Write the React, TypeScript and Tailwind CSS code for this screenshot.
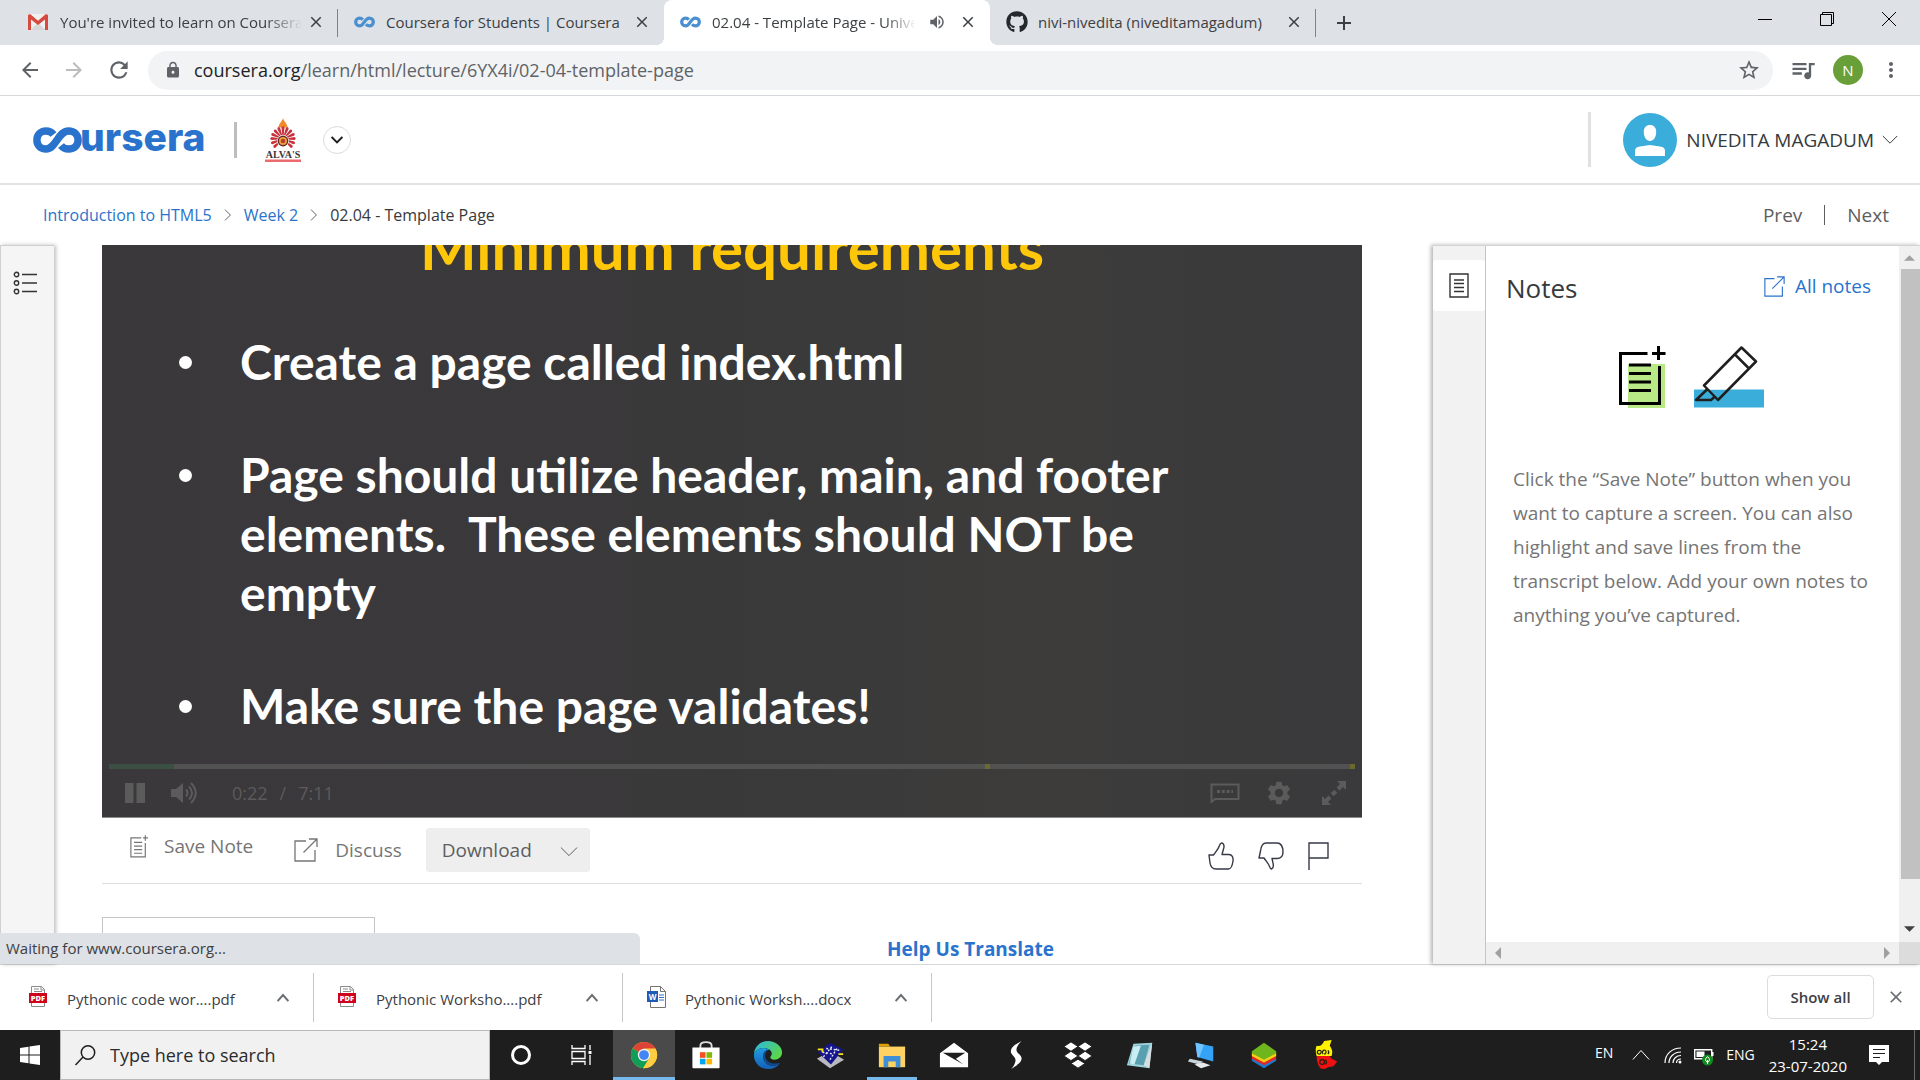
import React from "react";
import {
  MdArrowBack,
  MdArrowForward,
  MdRefresh,
  MdLock,
  MdStarBorder,
  MdQueueMusic,
  MdMoreVert,
  MdSettings,
  MdClose,
  MdAdd,
  MdVolumeUp,
} from "react-icons/md";
import { FaGithub } from "react-icons/fa";

/* ---------- shared drawings ---------- */

function InfinityMark({ className }: { className?: string }) {
  return (
    <svg viewBox="0 0 49 26" className={className} fill="none" stroke="currentColor" strokeWidth="7.5" aria-hidden="true">
      <path d="M20.500 7.500C18.500 5 16 3.900 13 3.900C7.500 3.900 3.900 8 3.900 13S7.500 22.100 13 22.100C23 22.100 25 3.900 35.500 3.900C41.500 3.900 45.100 8 45.100 13S41.500 22.100 35.500 22.100C32.500 22.100 30 21 28 18.500" />
    </svg>
  );
}

function GmailIcon() {
  return (
    <svg viewBox="0 0 20 16" className="h-4 w-5" aria-hidden="true">
      <rect width="20" height="16" rx="1" fill="#f1f1f1" />
      <path d="M2.500 16 10 8.500 17.500 16z" fill="#d8d8d8" />
      <path d="M0 1.500V16h3V5.500l7 5.500 7-5.500V16h3V1.500C20 .4 18.300-.3 17.300.6L10 6.800 2.700.6C1.700-.3 0 .4 0 1.500z" fill="#d64a3f" />
    </svg>
  );
}

function Chevron({ dir, className }: { dir: "down" | "right" | "up"; className?: string }) {
  const d = { down: "M1 5 10 14 19 5", up: "M1 15 10 5 19 15", right: "M5 1 14 10 5 19" }[dir];
  return (
    <svg viewBox="0 0 20 20" className={className} fill="none" stroke="currentColor" aria-hidden="true">
      <path d={d} vectorEffect="non-scaling-stroke" />
    </svg>
  );
}

function ExternalIcon({ className }: { className?: string }) {
  return (
    <svg viewBox="0 0 24 24" className={className} fill="none" stroke="currentColor" strokeWidth="1.3" aria-hidden="true">
      <path d="M12 3H1v20h20V12M15 1h8v8M23 1 9.500 14.500" />
    </svg>
  );
}

function NotePlusIcon({ className, width = 1.3 }: { className?: string; width?: number }) {
  return (
    <svg viewBox="0 0 20 25" className={className} fill="none" stroke="currentColor" strokeWidth={width} aria-hidden="true">
      <path d="M12.500 3H1v21h16V8.500M17 0v6M14.500 3H20M4.500 8h9M4.500 12h9M4.500 16h9M4.500 20h9" />
    </svg>
  );
}

/* ---------- browser chrome ---------- */

function Tab({ icon, title, active, audio, fade, divider }: { icon: React.ReactNode; title: string; active?: boolean; audio?: boolean; fade?: boolean; divider?: boolean }) {
  return (
    <div className={`relative flex h-full w-[326px] items-center pb-0.5 pl-4 pr-3 ${active ? "z-10 rounded-t-lg bg-white" : ""}`}>
      {active && (
        <>
          <span className="absolute -left-2 bottom-0 size-2 bg-[radial-gradient(circle_at_0_0,#dee1e6_8px,#fff_8px)]" />
          <span className="absolute -right-2 bottom-0 size-2 bg-[radial-gradient(circle_at_100%_0,#dee1e6_8px,#fff_8px)]" />
        </>
      )}
      <span className="flex w-8 shrink-0 items-center">{icon}</span>
      <span
        className={`min-w-0 flex-1 overflow-hidden whitespace-nowrap text-[15px] leading-6 text-[#3c4043] ${
          fade ? "[mask-image:linear-gradient(to_right,#000_85%,transparent)]" : ""
        }`}
      >
        {title}
      </span>
      {audio && <MdVolumeUp className="ml-3 mr-2 size-[18px] shrink-0 text-[#5f6368]" />}
      <button aria-label="Close tab" className="ml-1 grid size-5 shrink-0 place-items-center text-[#3c4043]">
        <MdClose className="size-[18px]" />
      </button>
      {divider && <span className="absolute right-0 top-[9px] h-7 w-px bg-[#7f8389]" />}
    </div>
  );
}

function TabStrip() {
  return (
    <div className="flex h-[45px] shrink-0 items-stretch bg-[#dee1e6]">
      <div className="flex pl-3">
        <Tab icon={<GmailIcon />} title="You're invited to learn on Coursera" fade divider />
        <Tab icon={<InfinityMark className="h-3 w-[21px] text-[#4a90d0]" />} title="Coursera for Students | Coursera" />
        <Tab icon={<InfinityMark className="h-3 w-[21px] text-[#4a90d0]" />} title="02.04 - Template Page - University" active audio fade />
        <Tab icon={<FaGithub className="size-[22px] text-[#24292e]" />} title="nivi-nivedita (niveditamagadum)" divider />
      </div>
      <button aria-label="New tab" className="ml-4 self-center text-[#3c4043]">
        <MdAdd className="size-6" />
      </button>
      <div className="ml-auto flex h-[38px] text-black">
        <button aria-label="Minimize" className="grid w-[62px] place-items-center">
          <svg viewBox="0 0 14 14" className="size-3.5" stroke="currentColor"><path d="M0 7.500h14" /></svg>
        </button>
        <button aria-label="Restore" className="grid w-[62px] place-items-center">
          <svg viewBox="0 0 14 14" className="size-3.5" fill="none" stroke="currentColor"><path d="M.5 2.500h11v11H.5zM2.500 2.500v-2h11v11h-2" /></svg>
        </button>
        <button aria-label="Close" className="grid w-[62px] place-items-center">
          <svg viewBox="0 0 14 14" className="size-3.5" stroke="currentColor"><path d="M0 0l14 14M14 0 0 14" /></svg>
        </button>
      </div>
    </div>
  );
}

function AddressBar() {
  return (
    <div className="flex h-[51px] shrink-0 items-center border-b border-[#d5d7da] bg-white pl-[18px] pr-[17px] text-[#5f6368]">
      <button aria-label="Back"><MdArrowBack className="size-6" /></button>
      <button aria-label="Forward" className="ml-5 text-[#babcbe]"><MdArrowForward className="size-6" /></button>
      <button aria-label="Reload" className="ml-5"><MdRefresh className="size-[26px]" /></button>
      <div className="ml-4 flex h-[39px] min-w-0 flex-1 items-center rounded-full bg-[#f1f3f4] pl-4 pr-3">
        <MdLock className="size-[18px] shrink-0" />
        <a href="#url" className="ml-3 flex-1 truncate text-[18px] leading-7 text-[#5f6368]">
          <span className="text-[#202124]">coursera.org</span>/learn/html/lecture/6YX4i/02-04-template-page
        </a>
        <button aria-label="Bookmark"><MdStarBorder className="size-6" /></button>
      </div>
      <button aria-label="Media controls" className="ml-4"><MdQueueMusic className="size-7" /></button>
      <button aria-label="Profile" className="ml-4 grid size-[30px] place-items-center rounded-full bg-[#689f38] text-[15px] leading-5 text-white">N</button>
      <button aria-label="Menu" className="ml-4"><MdMoreVert className="size-6 text-[#5f6368]" /></button>
    </div>
  );
}

/* ---------- page header ---------- */

function AlvasLogo() {
  const rays = Array.from({ length: 13 }, (_, i) => -132 + i * 22);
  return (
    <svg viewBox="0 0 36 44" className="h-11 w-9" role="img" aria-label="Alva's">
      <path d="M18 0c1 4 4.500 5.500 4.500 9.500h-9C13.500 5.500 17 4 18 0z" fill="#f08a2c" />
      {rays.map((a) => (
        <path key={a} d="M17.300 17 16.500 9.500q1.500-2.500 3 0L18.700 17z" fill="#c8323c" transform={`rotate(${a} 18 21)`} />
      ))}
      <circle cx="18" cy="23" r="6" fill="#fff" />
      <circle cx="18" cy="23" r="5.400" fill="#5e2b2b" />
      <circle cx="18" cy="23" r="4" fill="#f0a03c" />
      <circle cx="18" cy="23" r="2.300" fill="#b8402a" />
      <text x="18" y="40" textAnchor="middle" fontFamily="Liberation Serif, serif" fontWeight="700" fontSize="10" fill="#3c3434">ALVA'S</text>
      <rect x="0" y="41.500" width="36" height="2.500" fill="#ea6a6e" />
    </svg>
  );
}

function SiteHeader() {
  return (
    <header className="flex h-[89px] shrink-0 items-center border-b-2 border-[#e3e3e3] bg-white pl-[33px] pr-[22px]">
      <a href="#home" aria-label="Coursera" className="flex items-center text-[#2a73cc]">
        <InfinityMark className="h-[26px] w-[49px]" />
        <span className="-ml-0.5 -mt-1.5 font-['Inter',sans-serif] text-[39px] font-extrabold leading-10">ursera</span>
      </a>
      <span className="ml-7 h-9 w-[3px] bg-[#bdbdbd]" />
      <a href="#alvas" className="ml-7"><AlvasLogo /></a>
      <button aria-label="Switch program" className="ml-[22px] grid size-7 place-items-center rounded-full border border-[#dcdcdc] text-[#1f1f1f]">
        <Chevron dir="down" className="size-3 stroke-2" />
      </button>
      <span className="ml-auto h-[55px] w-[3px] bg-[#e1e1e1]" />
      <button className="ml-8 flex items-center text-[19px] leading-7 text-[#373a3c]">
        <svg viewBox="0 0 54 54" className="mr-[9px] size-[54px]" aria-hidden="true">
          <circle cx="27" cy="27" r="27" fill="#3badda" />
          <path d="M27 12c4 0 6.200 2.700 6.200 7 0 5-2.600 9-6.200 9s-6.200-4-6.200-9c0-4.300 2.200-7 6.200-7zM12 43v-5c0-3 2-4 5-4.500l10-1.500 10 1.500c3 .5 5 1.500 5 4.500v5z" fill="#fff" />
        </svg>
        NIVEDITA MAGADUM
        <Chevron dir="down" className="ml-2 size-4" />
      </button>
    </header>
  );
}

function Breadcrumbs() {
  return (
    <nav aria-label="Breadcrumb" className="flex h-[60px] shrink-0 items-center bg-white pl-[43px] pr-[31px] text-[16px] leading-6 text-[#373a3c]">
      <a href="#course" className="text-[#2a73cc]">Introduction to HTML5</a>
      <Chevron dir="right" className="mx-2.5 size-3 text-[#666]" />
      <a href="#week" className="text-[#2a73cc]">Week 2</a>
      <Chevron dir="right" className="mx-2.5 size-3 text-[#666]" />
      <span>02.04 - Template Page</span>
      <div className="ml-auto flex items-center text-[19px] leading-7 text-[#5e5e5e]">
        <a href="#prev">Prev</a>
        <span className="mx-[22px] h-5 w-px bg-[#5e5e5e]" />
        <a href="#next">Next</a>
      </div>
    </nav>
  );
}

/* ---------- lecture ---------- */

function LeftRail() {
  return (
    <aside className="z-10 w-[54px] shrink-0 border-l border-t border-[#cfcfcf] bg-[#f5f5f5] pl-3 pt-[25px] shadow-[2px_0_4px_rgba(0,0,0,0.25)]">
      <button aria-label="Lecture list">
        <svg viewBox="0 0 24 24" className="size-6" fill="none" stroke="#333" strokeWidth="1.400">
          <circle cx="3.500" cy="3.500" r="2.200" /><circle cx="3.500" cy="12" r="2.200" /><circle cx="3.500" cy="20.500" r="2.200" />
          <path d="M9 3.500h15M9 12h15M9 20.500h15" />
        </svg>
      </button>
    </aside>
  );
}

const BULLETS = [
  "Create a page called index.html",
  "Page should utilize header, main, and footer elements.\u00a0 These elements should NOT be empty",
  "Make sure the page validates!",
];

function Player() {
  return (
    <section className="flex h-[573px] shrink-0 flex-col overflow-hidden border-b border-[#8a8a8a] bg-[linear-gradient(90deg,#3a383b,#3a393a_50%,#3d3c3b_75%,#3a393b)]">
      <div className="flex-1 pl-[75px] pr-[150px] font-['Lato',sans-serif] font-bold">
        <h2 className="-mt-7 ml-[75px] text-center text-[60px] leading-[60px] text-[#ffc709]">Minimum requirements</h2>
        <ul className="mt-[55px] flex flex-col gap-[54px] text-[48px] leading-[59px] text-white">
          {BULLETS.map((b) => (
            <li key={b} className="flex">
              <span className="ml-0.5 mt-6 size-[13px] shrink-0 rounded-full bg-white" />
              <span className="ml-12">{b}</span>
            </li>
          ))}
        </ul>
      </div>
      <div className="px-[7px] text-[#5c5b5c]">
        <div className="relative h-[5px] bg-[#535253]">
          <span className="absolute left-0 top-0 h-full w-[5.2%] bg-[#3b4f42]" />
          <span className="absolute left-[70.3%] top-0 h-full w-[5px] bg-[#6b6a2c]" />
          <span className="absolute right-0 top-0 h-full w-[5px] bg-[#6b6a2c]" />
        </div>
        <div className="flex h-12 items-center pl-4 pr-[9px]">
          <button aria-label="Pause">
            <svg viewBox="0 0 20 20" className="size-5" fill="currentColor"><path d="M0 0h8.500v20H0zM11.500 0H20v20h-8.500z" /></svg>
          </button>
          <button aria-label="Mute" className="ml-[26px]">
            <svg viewBox="0 0 27 22" className="h-[22px] w-[27px]" fill="currentColor">
              <path d="M0 7h5l7-6v20l-7-6H0z" />
              <path d="M15 7.500q3 3.500 0 7M18 4.500q6 6.500 0 13M20 1q9.500 10 0 20" fill="none" stroke="currentColor" strokeWidth="2" />
            </svg>
          </button>
          <span className="ml-[34px] flex gap-3 text-[18px] leading-6">
            <span>0:22</span>
            <span>/</span>
            <span>7:11</span>
          </span>
          <button aria-label="Subtitles" className="ml-auto">
            <svg viewBox="0 0 30 20" className="h-5 w-[30px]" fill="none" stroke="currentColor" strokeWidth="2">
              <path d="M1.500 19V1.500h27v14.500H5z" />
              <path d="M7 8.500h16" strokeWidth="3" strokeDasharray="3 1.800" />
            </svg>
          </button>
          <button aria-label="Settings" className="ml-[25px]"><MdSettings className="size-7" /></button>
          <button aria-label="Full screen" className="ml-[29px]">
            <svg viewBox="0 0 24 24" className="size-6" fill="currentColor">
              <path d="M24 0v9l-3-3-3.500 3.500-3-3L18 3l-3-3zM0 24v-9l3 3 3.500-3.500 3 3L6 21l3 3z" />
              <path d="M12.300 8.700l3 3-3.600 3.600-3-3z" />
            </svg>
          </button>
        </div>
      </div>
    </section>
  );
}

function Actions() {
  return (
    <div className="flex h-[66px] shrink-0 items-start border-b border-[#dedede] pl-7 pr-8 pt-2.5 text-[19px] leading-7 text-[#757575]">
      <button className="mt-1.5 flex items-center">
        <NotePlusIcon className="mb-0.5 mr-4 h-[25px] w-[18px]" />
        <span className="-mt-1">Save Note</span>
      </button>
      <a href="#discuss" className="ml-[41px] mt-2 flex items-center">
        <ExternalIcon className="mr-[17px] size-6" />
        Discuss
      </a>
      <button className="ml-6 flex h-11 w-[164px] items-center justify-between rounded-[3px] bg-[#eee] pl-4 pr-3 text-[#5e5e5e]">
        Download
        <Chevron dir="down" className="mt-1 size-[18px]" />
      </button>
      <div className="ml-auto flex gap-6 pt-3.5 text-[#373a45]">
        <button aria-label="Like">
          <svg viewBox="0 0 26 28" className="h-7 w-[26px]" fill="none" stroke="currentColor" strokeWidth="1.400" strokeLinejoin="round">
            <path d="M1 13h4.500c2-3 5-6 6-9.500C12 1.500 13.500.8 14 1c2 .5 2.500 3.500 1.500 6L14 12.500h7c3 0 4.500 3 4 6.500-.5 3.500-1.500 8-4.500 8H8c-4 0-5.500-3-6-6z" />
          </svg>
        </button>
        <button aria-label="Dislike">
          <svg viewBox="0 0 26 28" className="h-7 w-[26px]" fill="none" stroke="currentColor" strokeWidth="1.400" strokeLinejoin="round">
            <path d="M1 16h5c2 3 5 6 6 9.500.5 1 1 1.500 1.500 1.500 2-1 2-4 1.500-6L14 16.500h5c4 0 6-2.500 6-6.500 0-5-2-9-6-9H8c-4 0-5 4-5.500 8z" />
          </svg>
        </button>
        <button aria-label="Report">
          <svg viewBox="0 0 22 28" className="h-7 w-[22px]" fill="none" stroke="currentColor" strokeWidth="1.400">
            <path d="M1 28V1h19v15H1" />
          </svg>
        </button>
      </div>
    </div>
  );
}

function Lecture() {
  return (
    <main className="flex min-w-0 flex-1 flex-col overflow-hidden pl-12 pr-[71px]">
      <Player />
      <Actions />
      <div className="mt-[33px] flex shrink-0 items-start">
        <div className="h-20 w-[273px] border border-[#c4c4c4]" />
        <a href="#translate" className="ml-[512px] mt-[18px] text-[19px] font-bold leading-7 text-[#2a73cc]">Help Us Translate</a>
      </div>
    </main>
  );
}

/* ---------- notes ---------- */

function Arrow({ className }: { className?: string }) {
  return <svg viewBox="0 0 12 6" className={className} fill="currentColor" aria-hidden="true"><path d="M6 0l6 6H0z" /></svg>;
}

function Notes() {
  return (
    <aside className="z-10 flex w-[487px] shrink-0 border-t border-[#d4d4d4] shadow-[-2px_0_4px_rgba(0,0,0,0.3)]">
      <div className="w-[53px] shrink-0 border-r border-[#c4c4c4] bg-[#f2f2f2] pt-3.5">
        <button aria-label="Notes" className="grid h-[51px] w-full place-items-center rounded-[3px] bg-white">
          <svg viewBox="0 0 20 25" className="h-[25px] w-5" fill="none" stroke="#333" strokeWidth="1.400">
            <path d="M1 1h18v23H1zM5 7h10M5 10.500h10M5 14.500h10M5 18.500h10" />
          </svg>
        </button>
      </div>
      <div className="flex min-w-0 flex-1 flex-col bg-white">
        <div className="flex-1 pl-5 pr-7">
          <div className="flex items-start pt-6">
            <h2 className="text-[26px] leading-9 text-[#373a3c]">Notes</h2>
            <a href="#all" className="ml-auto flex items-center text-[19px] leading-8 text-[#2a73cc]">
              <ExternalIcon className="mr-2.5 size-[21px]" />
              All notes
            </a>
          </div>
          <div className="mt-10 flex justify-center gap-7 pl-1.5">
            <svg viewBox="0 0 47 62" className="h-[62px] w-[47px]" fill="none" stroke="#000" strokeWidth="3">
              <path d="M9 18h37v44H9z" fill="#b8e986" stroke="none" />
              <path d="M28.500 7.500H1.500v50h39V20M39.500 0v14M33 7.500h13.500M10 19h22M10 27.500h22M10 36h22M10 44.500h22" />
            </svg>
            <svg viewBox="0 0 70 62" className="h-[62px] w-[70px]" fill="none" stroke="#1f1f1f" strokeWidth="2.500" strokeLinejoin="round">
              <path d="M0 43.500h70V61.500H0z" fill="#3badda" stroke="none" />
              <path d="M47.500 1.500 62 15.500 34 43.500H13l-3-4z" fill="#fff" stroke="none" />
              <path d="M47.500 1.500 62 15.500 24 54 10 39.500zM41 8.500 55 22.500M13 43.500 2 54h15l4-3.500" />
            </svg>
          </div>
          <p className="mt-[54px] pl-[7px] text-[19px] leading-[34px] text-[#757575]">
            Click the “Save Note” button when you want to capture a screen. You can also highlight and save lines from the
            transcript below. Add your own notes to anything you’ve captured.
          </p>
        </div>
        <div className="flex h-[22px] items-center justify-between bg-[#f0f0f0] px-1.5 text-[#a0a0a0]">
          <Arrow className="h-1.5 w-3 -rotate-90" />
          <Arrow className="h-1.5 w-3 rotate-90" />
        </div>
      </div>
      <div className="flex w-[21px] flex-col items-stretch bg-[#f0f0f0]">
        <div className="grid h-[23px] place-items-center text-[#a0a0a0]"><Arrow className="h-1.5 w-[11px]" /></div>
        <div className="ml-0.5 flex-1 bg-[#c1c1c1]" />
        <div className="flex h-[63px] items-end justify-center pb-2.5 text-[#404040]"><Arrow className="h-1.5 w-[11px] rotate-180" /></div>
        <div className="h-[22px] bg-[#dcdcdc]" />
      </div>
    </aside>
  );
}

/* ---------- downloads ---------- */

function PdfIcon() {
  return (
    <svg viewBox="0 0 18 21" className="h-[21px] w-[18px]" aria-hidden="true">
      <path d="M2.500.5h10l3 3v17h-13z" fill="#fff" stroke="#8a8a8a" />
      <path d="M12 .5v3.500h3.500M5 3h5M5 5.500h8" fill="none" stroke="#8a8a8a" />
      <rect y="7" width="18" height="10" fill="#d0021b" />
      <text x="9" y="15" textAnchor="middle" fontFamily="Open Sans, sans-serif" fontWeight="800" fontSize="7.500" fill="#fff">PDF</text>
    </svg>
  );
}

function WordIcon() {
  return (
    <svg viewBox="0 0 19 22" className="h-[22px] w-[19px]" aria-hidden="true">
      <path d="M3.500.5h10l5 5v16h-15z" fill="#fff" stroke="#757575" />
      <path d="M13.500.5v5h5" fill="none" stroke="#757575" />
      <path d="M12 9h5M12 11.500h5M12 14h5" stroke="#2b6cc4" />
      <rect y="5" width="11" height="11" fill="#1e5bb8" />
      <text x="5.500" y="13.500" textAnchor="middle" fontFamily="Open Sans, sans-serif" fontWeight="700" fontSize="8" fill="#fff">W</text>
    </svg>
  );
}

function DownloadItem({ icon, name }: { icon: React.ReactNode; name: string }) {
  return (
    <div className="flex h-[49px] w-[309px] items-center border-r border-[#c4c6c9] pl-6">
      <span className="mb-0.5 w-[38px]">{icon}</span>
      <a href="#file" className="mt-0.5 text-[15px] leading-6 text-[#3c4043]">{name}</a>
      <button aria-label="More" className="ml-auto mr-[24px] text-[#6b6f73]"><Chevron dir="up" className="size-3 stroke-2" /></button>
    </div>
  );
}

function DownloadBar() {
  return (
    <div className="flex h-[66px] shrink-0 items-center border-t border-[#d5d7da] bg-white pl-[5px] pr-3.5">
      <DownloadItem icon={<PdfIcon />} name="Pythonic code wor....pdf" />
      <DownloadItem icon={<PdfIcon />} name="Pythonic Worksho....pdf" />
      <DownloadItem icon={<WordIcon />} name="Pythonic Worksh....docx" />
      <button className="mb-0.5 ml-auto h-11 w-[107px] rounded-[5px] border border-[#dadce0] text-[15px] font-semibold leading-6 text-[#3c4043]">Show all</button>
      <button aria-label="Close downloads" className="mb-0.5 ml-3 text-[#6b6f73]"><MdClose className="size-5" /></button>
    </div>
  );
}

/* ---------- taskbar ---------- */

const APPS: { name: string; state?: "focused" | "open"; art: React.ReactNode }[] = [
  {
    name: "Chrome",
    state: "focused",
    art: (
      <>
        <circle cx="16" cy="16" r="14" fill="#fbc116" />
        <path d="M16 16 3.900 9A14 14 0 0 1 28.100 9z" fill="#db4437" />
        <path d="M16 2a14 14 0 0 1 12.100 7H16z" fill="#db4437" />
        <path d="M3.900 9A14 14 0 0 0 15 30l7-11-6-3z" fill="#0f9d58" />
        <path d="M16 9h12.100A14 14 0 0 1 15 30l7-11z" fill="#ffcd40" />
        <circle cx="16" cy="16" r="6.600" fill="#f1f1f1" />
        <circle cx="16" cy="16" r="5.200" fill="#4285f4" />
      </>
    ),
  },
  {
    name: "Microsoft Store",
    art: (
      <>
        <path d="M10 9V6c0-5 12-5 12 0v3" fill="none" stroke="#ddd" strokeWidth="2" />
        <path d="M1.500 8h29v21q0 1-1 1h-27q-1 0-1-1z" fill="#fff" />
        <path d="M9.500 13h6v6h-6z" fill="#f25022" /><path d="M16.500 13h6v6h-6z" fill="#7fba00" />
        <path d="M9.500 20h6v6h-6z" fill="#00a4ef" /><path d="M16.500 20h6v6h-6z" fill="#ffb900" />
      </>
    ),
  },
  {
    name: "Edge",
    art: (
      <>
        <defs>
          <linearGradient id="edgeTop" x1="0" y1="0" x2="1" y2="0.600"><stop offset="0" stopColor="#2bb5ea" /><stop offset="1" stopColor="#5bd848" /></linearGradient>
          <linearGradient id="edgeLow" x1="0" y1="0" x2="0" y2="1"><stop offset="0" stopColor="#1e9de0" /><stop offset="1" stopColor="#1560b8" /></linearGradient>
        </defs>
        <path d="M1 16C1 7 8 1 16 1s15 6 15 12c0 5-4 8-8 8-3 0-4.500-1-4.500-2.500S20 17 20 14.500C20 11 16 8.500 12 8.500 6 8.500 1 12 1 16z" fill="url(#edgeTop)" />
        <path d="M1 16c0-4 5-7.500 11-7.500 2 0 4 .8 5.500 2C12 11 10.500 15 11 19c.6 5 5 8.500 10 8.500 3 0 5.500-1 7.500-2.500C26 28.500 21.500 31 16 31 7.500 31 1 24.500 1 16z" fill="url(#edgeLow)" />
        <path d="M11 19c-.5-4 1-8 5-8.500-2 2-3 4-3 6.500 0 5 6 9 12 8 1.500-.3 3-1 3.500 0-2 1.500-4.500 2.500-7.500 2.500-5 0-9.400-3.500-10-8.500z" fill="#134a8e" />
      </>
    ),
  },
  {
    name: "Visual tools",
    art: (
      <>
        <path d="M2 20 16 12l15 9-15 9z" fill="#b9b9c0" />
        <path d="M3 13 16 3l14 7-13 16z" fill="#15158c" />
        <path d="M8 13l12 2M12 9l14 2M9 18l9-11M16 21 24 8" stroke="#e9e9f5" strokeWidth="1.500" strokeDasharray="2 2" />
        <path d="M3 10h5v3M25 15h5" stroke="#f5e61e" strokeWidth="2" fill="none" />
      </>
    ),
  },
  {
    name: "File Explorer",
    state: "open",
    art: (
      <>
        <path d="M2 4h10l2 3H2z" fill="#e0a100" />
        <path d="M2 7h28v22H2z" fill="#ffd262" />
        <path d="M7 29V17h18v12h-5v-6h-8v6z" fill="#3f8fd6" />
      </>
    ),
  },
  {
    name: "Mail",
    art: <><path d="M1 14 16 3l15 11v15H1z" fill="#fff" /><path d="M4 13.500 28 13.500 18 20l8 6z" fill="#1e1e1e" /></>,
  },
  {
    name: "Sway",
    art: <path d="M22 1C15 5 11 7 10.500 12c-.3 4 5.500 6 5 10-.4 3-2 6-4.500 9 6-4 10.500-7 11-11 .3-4-5.500-5.500-5.500-9.500C16.500 7 19 4 22 1z" fill="#fff" />,
  },
  {
    name: "Dropbox",
    art: <path d="M8.500 2 16 7 8.500 12 1 7zM23.500 2 31 7l-7.500 5L16 7zM8.500 12l7.500 5-7.500 5L1 17zM23.500 12l7.500 5-7.500 5-7.500-5zM16 20.500l7.500 4.500-7.500 5-7.500-5z" fill="#fff" stroke="#1e1e1e" strokeWidth="1" />,
  },
  {
    name: "Notepad",
    art: (
      <>
        <path d="M9 4 29 3 26 30 2 27z" fill="#9fd3dc" />
        <path d="M10 6 26 5 20 27 4 25z" fill="#5a9fb0" />
        <path d="M9 7l8-1-7 20-5-1z" fill="#c8edf2" />
        <path d="M29 3 26 30l-6-3z" fill="#d8dde0" />
      </>
    ),
  },
  {
    name: "Remote desktop",
    art: (
      <>
        <path d="M9 3 28 7v16L11 18z" fill="#35a3f5" /><path d="M9 3l9 2-5 14-2-1z" fill="#72c4ff" />
        <path d="M3 20l14 3-4 3-12-3z" fill="#c9d3da" /><path d="M8 26l9-2 8 3-10 3z" fill="#e6eaed" />
      </>
    ),
  },
  {
    name: "BlueStacks",
    art: (
      <>
        <path d="M3 20l13-7 13 7v2l-13 8-13-8z" fill="#1c7ad1" /><path d="M3 17l13-7 13 7v3l-13 7-13-7z" fill="#e02a23" />
        <path d="M3 14l13-7 13 7v3l-13 7-13-7z" fill="#f7d117" /><path d="M3 12 16 3l13 9v2l-13 7-13-7z" fill="#6fb51c" />
      </>
    ),
  },
  {
    name: "Nudi",
    art: (
      <>
        <path d="M6 6q5 2 8-5l8-1-2 6q4 5 2 11H6q-2-7 0-11z" fill="#fff200" />
        <path d="M6 17h14l2 3 6 3-4 5-6 1q-3 3-8 1-4-5-4-13z" fill="#ee1111" />
        <path d="M9 15c-3 0-3-4 0-4s2 4 0 4M13 15c-2-2 0-5 2-4s1 4-1 4M18 11q2 2 0 4M12 26c-4 0-3-5 0-5s3 5 0 5M15 26q3-2 0-5" fill="none" stroke="#221" strokeWidth="1.300" />
      </>
    ),
  },
];

function Taskbar() {
  return (
    <div className="flex h-[50px] shrink-0 items-stretch bg-[#1e1e1e] text-white">
      <button aria-label="Start" className="grid w-[60px] place-items-center">
        <svg viewBox="0 0 20 20" className="size-5" fill="#fff"><path d="M0 3 8.500 1.700v7.800H0zM9.500 1.500 20 0v9.500H9.500zM0 10.500h8.500v7.800L0 17zM9.500 10.500H20V20L9.500 18.500z" /></svg>
      </button>
      <label className="flex w-[430px] items-center border border-[#b9b9b9] bg-[#f1f1f1] pl-3.5 text-[#1e1e1e]">
        <svg viewBox="0 0 21 21" className="mr-3.5 size-[21px]" fill="none" stroke="currentColor" strokeWidth="1.500" aria-hidden="true">
          <circle cx="13" cy="7.500" r="6.700" /><path d="M8 12 .5 20" />
        </svg>
        <input aria-label="Search" placeholder="Type here to search" className="min-w-0 flex-1 bg-transparent text-[18px] leading-7 outline-none placeholder:text-[#2b2b2b]" />
      </label>
      <button aria-label="Cortana" className="grid w-[61px] place-items-center">
        <span className="size-5 rounded-full border-[3px] border-white" />
      </button>
      <button aria-label="Task view" className="grid w-[62px] place-items-center">
        <svg viewBox="0 0 22 20" className="h-5 w-[22px]" fill="none" stroke="#fff" strokeWidth="1.300">
          <path d="M1 0v3.500h13V0M1 6.500h13v7H1zM1 20v-3.500h13V20M19 0v5M19 10v10" /><path d="M17.500 6h3v3h-3z" fill="#fff" stroke="none" />
        </svg>
      </button>
      {APPS.map((a) => (
        <button key={a.name} aria-label={a.name} className={`relative grid w-[62px] place-items-center ${a.state === "focused" ? "bg-[#4a4a4a]" : ""}`}>
          <svg viewBox="0 0 32 32" className="size-[30px]">{a.art}</svg>
          {a.state === "focused" && <span className="absolute inset-x-0 bottom-0 h-[3px] bg-[#76b9ed]" />}
          {a.state === "open" && <span className="absolute inset-x-1.5 bottom-0 h-[3px] bg-[#76b9ed]" />}
        </button>
      ))}
      <div className="ml-auto flex items-center pr-[5px] text-[14px] leading-[22px]">
        <span className="mb-1">EN</span>
        <Chevron dir="up" className="ml-[19px] mr-3.5 size-[18px]" />
        <svg viewBox="0 0 18 18" className="size-[18px]" fill="none" stroke="#fff" strokeWidth="1.200" aria-hidden="true">
          <path d="M1 17C1 8 8 2 17 2M5 17c0-6 5-11 12-11M9 17c0-4 3-7.500 8-7.500M12.500 17q0-4 4.500-4" /><circle cx="16" cy="16" r="1.500" fill="#fff" stroke="none" />
        </svg>
        <svg viewBox="0 0 20 18" className="ml-3 mt-1 h-[18px] w-5" aria-hidden="true">
          <path d="M.7 1.700h17v9H.7z" fill="none" stroke="#fff" strokeWidth="1.400" /><path d="M2.500 3.500h8v5.500h-8z" fill="#fff" /><path d="M18 4h1.500v4H18z" fill="#fff" />
          <circle cx="13.500" cy="12" r="5.500" fill="#128a1d" /><path d="M13.500 8.500q4 3.500 0 6-4-2.500 0-6zM13.500 12v4" fill="none" stroke="#fff" />
        </svg>
        <span className="ml-3">ENG</span>
        <div className="ml-3.5 text-center text-[15px]">
          <div>15:24</div>
          <div>23-07-2020</div>
        </div>
        <svg viewBox="0 0 20 20" className="ml-[22px] size-5" aria-hidden="true">
          <path d="M0 0h20v17h-7l-3 3-3-3H0z" fill="#fff" /><path d="M4 4.500h12M4 8.500h12M4 12.500h7" stroke="#1e1e1e" strokeWidth="1.200" />
        </svg>
        <span className="ml-[25px] h-[50px] w-px bg-[#6a6a6a]" />
      </div>
    </div>
  );
}

export default function App() {
  return (
    <div className="relative flex h-screen flex-col overflow-hidden bg-white font-['Open_Sans',sans-serif]">
      <TabStrip />
      <AddressBar />
      <SiteHeader />
      <Breadcrumbs />
      <div className="relative flex min-h-0 flex-1">
        <LeftRail />
        <Lecture />
        <Notes />
        <div className="absolute bottom-0 left-0 z-20 h-[31px] w-1/3 rounded-tr-md bg-[#dee1e6] pl-1.5 text-[15px] leading-[31px] text-[#3c4043]">
          Waiting for www.coursera.org...
        </div>
      </div>
      <DownloadBar />
      <Taskbar />
    </div>
  );
}
